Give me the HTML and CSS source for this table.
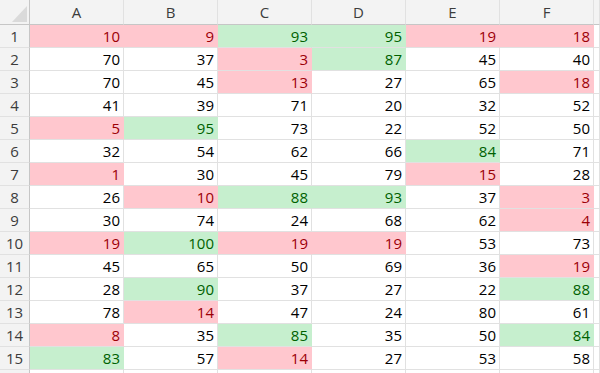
FILE: index.html
```html
<!DOCTYPE html>
<html>
<head>
<meta charset="utf-8">
<link rel="stylesheet" href="styles.css">
</head>
<body>
<div class="sheet">
  <div class="corner"><span class="tri"></span></div>
  <div class="ch">A</div><div class="ch">B</div><div class="ch">C</div><div class="ch">D</div><div class="ch">E</div><div class="ch">F</div><div class="ch"></div>

  <div class="rh">1</div><div class="c r">10</div><div class="c r">9</div><div class="c g">93</div><div class="c g">95</div><div class="c r">19</div><div class="c r">18</div><div class="c"></div>
  <div class="rh">2</div><div class="c">70</div><div class="c">37</div><div class="c r">3</div><div class="c g">87</div><div class="c">45</div><div class="c">40</div><div class="c"></div>
  <div class="rh">3</div><div class="c">70</div><div class="c">45</div><div class="c r">13</div><div class="c">27</div><div class="c">65</div><div class="c r">18</div><div class="c"></div>
  <div class="rh">4</div><div class="c">41</div><div class="c">39</div><div class="c">71</div><div class="c">20</div><div class="c">32</div><div class="c">52</div><div class="c"></div>
  <div class="rh">5</div><div class="c r">5</div><div class="c g">95</div><div class="c">73</div><div class="c">22</div><div class="c">52</div><div class="c">50</div><div class="c"></div>
  <div class="rh">6</div><div class="c">32</div><div class="c">54</div><div class="c">62</div><div class="c">66</div><div class="c g">84</div><div class="c">71</div><div class="c"></div>
  <div class="rh">7</div><div class="c r">1</div><div class="c">30</div><div class="c">45</div><div class="c">79</div><div class="c r">15</div><div class="c">28</div><div class="c"></div>
  <div class="rh">8</div><div class="c">26</div><div class="c r">10</div><div class="c g">88</div><div class="c g">93</div><div class="c">37</div><div class="c r">3</div><div class="c"></div>
  <div class="rh">9</div><div class="c">30</div><div class="c">74</div><div class="c">24</div><div class="c">68</div><div class="c">62</div><div class="c r">4</div><div class="c"></div>
  <div class="rh">10</div><div class="c r">19</div><div class="c g">100</div><div class="c r">19</div><div class="c r">19</div><div class="c">53</div><div class="c">73</div><div class="c"></div>
  <div class="rh">11</div><div class="c">45</div><div class="c">65</div><div class="c">50</div><div class="c">69</div><div class="c">36</div><div class="c r">19</div><div class="c"></div>
  <div class="rh">12</div><div class="c">28</div><div class="c g">90</div><div class="c">37</div><div class="c">27</div><div class="c">22</div><div class="c g">88</div><div class="c"></div>
  <div class="rh">13</div><div class="c">78</div><div class="c r">14</div><div class="c">47</div><div class="c">24</div><div class="c">80</div><div class="c">61</div><div class="c"></div>
  <div class="rh">14</div><div class="c r">8</div><div class="c">35</div><div class="c g">85</div><div class="c">35</div><div class="c">50</div><div class="c g">84</div><div class="c"></div>
  <div class="rh">15</div><div class="c g">83</div><div class="c">57</div><div class="c r">14</div><div class="c">27</div><div class="c">53</div><div class="c">58</div><div class="c"></div>
  <div class="rh"></div><div class="c"></div><div class="c"></div><div class="c"></div><div class="c"></div><div class="c"></div><div class="c"></div><div class="c"></div>
</div>
</body>
</html>
```
FILE: styles.css
```css
html, body {
  margin: 0;
  padding: 0;
  background: #ffffff;
  overflow: hidden;
}
.sheet {
  display: grid;
  grid-template-columns: 30px repeat(6, 94px) 1fr;
  grid-template-rows: 25px repeat(16, 23px);
  width: 600px;
  font-family: "Open Sans", "Noto Sans", sans-serif;
}
.corner {
  position: relative;
  background: #f3f3f3;
  border-right: 1px solid #c6c6c6;
  border-bottom: 1px solid #c6c6c6;
}
.tri {
  position: absolute;
  right: 2px;
  bottom: 2px;
  width: 0;
  height: 0;
  border-left: 15px solid transparent;
  border-bottom: 16px solid #dadada;
}
.ch {
  background: #f3f3f3;
  border-right: 1px solid #e1e1e1;
  border-bottom: 1px solid #c6c6c6;
  color: #3c3c3c;
  font-size: 15px;
  display: flex;
  align-items: center;
  justify-content: center;
}
.rh {
  background: #f3f3f3;
  border-right: 1px solid #c6c6c6;
  border-bottom: 1px solid #e1e1e1;
  color: #3c3c3c;
  font-size: 15px;
  display: flex;
  align-items: center;
  justify-content: center;
}
.c {
  border-right: 1px solid #e1e1e1;
  border-bottom: 1px solid #e1e1e1;
  color: #000000;
  font-size: 15px;
  display: flex;
  align-items: center;
  justify-content: flex-end;
  padding-right: 3px;
}
.c.r {
  background: #ffc7ce;
  color: #9c0006;
  border-right-color: #ffc7ce;
}
.c.g {
  background: #c6efce;
  color: #006100;
  border-right-color: #c6efce;
}
```
